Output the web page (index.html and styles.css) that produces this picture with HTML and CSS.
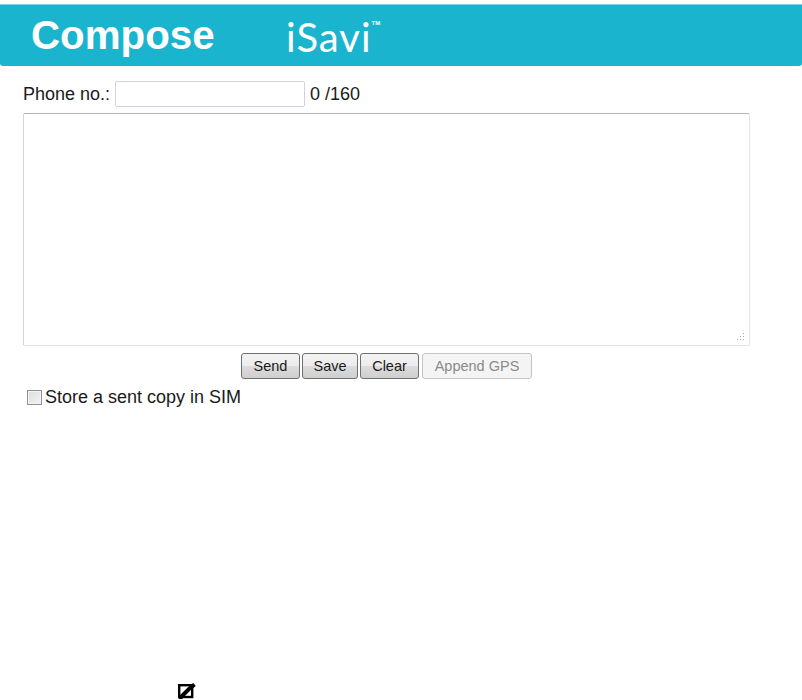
FILE: index.html
```html
<!DOCTYPE html>
<html lang="en">
<head>
<meta charset="utf-8">
<title>Compose</title>
<link rel="stylesheet" href="styles.css">
</head>
<body>
<header class="banner">
  <h1 class="title">Compose</h1>
  <div class="brand"><span class="brand-name">iSavi</span><span class="tm">TM</span></div>
</header>
<main class="form">
  <div class="phone-row">
    <label class="phone-label" for="phone">Phone no.:</label>
    <input class="phone-input" id="phone" type="text">
    <span class="counter">0 /160</span>
  </div>
  <div class="message-box">
    <svg class="grip" width="11" height="11" viewBox="0 0 11 11"><g fill="#a8a8a8"><rect x="8" y="1" width="1" height="1"/><rect x="8" y="4" width="1" height="1"/><rect x="5" y="4" width="1" height="1"/><rect x="8" y="7" width="1" height="1"/><rect x="5" y="7" width="1" height="1"/><rect x="2" y="7" width="1" height="1"/></g></svg>
  </div>
  <div class="actions">
    <button class="btn btn-send" type="button">Send</button>
    <button class="btn btn-save" type="button">Save</button>
    <button class="btn btn-clear" type="button">Clear</button>
    <button class="btn btn-gps" type="button" disabled>Append GPS</button>
  </div>
  <label class="store">
    <span class="check"></span>
    <span>Store a sent copy in SIM</span>
  </label>
</main>
<footer class="foot">
  <svg width="22" height="18" viewBox="0 0 22 18"><rect x="4.2" y="2.2" width="13" height="11.8" fill="#fff" stroke="#000" stroke-width="2.4"/><path d="M5.5 14.5 L14 6 L19.5 1.5" fill="none" stroke="#000" stroke-width="4"/><path d="M3 12 L8 16 L4 16 Z" fill="#000"/></svg>
</footer>
</body>
</html>
```
FILE: styles.css
```css
html, body { margin: 0; padding: 0; }
body {
  width: 802px;
  height: 700px;
  overflow: hidden;
  background: #fff;
  font-family: "Liberation Sans", Arial, sans-serif;
  font-size: 18px;
  color: #1a1a1a;
  display: flex;
  flex-direction: column;
}
.banner {
  margin-top: 4px;
  height: 62px;
  box-sizing: border-box;
  border-top: 1px solid #7fd3e2;
  border-radius: 0 0 3px 3px;
  background: #1ab4cf;
  display: flex;
  align-items: center;
  padding-left: 31px;
  color: #fff;
}
.title {
  margin: 0;
  font-size: 40.3px;
  font-weight: 700;
  line-height: 60px;
  width: 255px;
}
.brand {
  display: flex;
  align-items: flex-start;
  padding-top: 3px;
  font-family: "Lato", sans-serif;
  font-weight: 400;
}
.brand-name { font-size: 40px; line-height: 46px; letter-spacing: 1px; }
.tm { font-size: 6px; line-height: 8px; font-family: "Liberation Sans", sans-serif; font-weight: 700; margin-top: 5px; }
.form {
  padding: 15px 0 0 23px;
  width: 727px;
  display: flex;
  flex-direction: column;
}
.phone-row {
  display: flex;
  align-items: center;
  height: 26px;
}
.phone-label { width: 92px; white-space: nowrap; }
.phone-input {
  width: 190px;
  height: 26px;
  box-sizing: border-box;
  margin: 0;
  border: 1px solid #cfd3dc;
  border-radius: 2px;
  background: #fff;
}
.counter { margin-left: 5px; }
.message-box {
  margin-top: 6px;
  height: 233px;
  box-sizing: border-box;
  border: 1px solid #e0e4ea;
  border-top-color: #b4b4b4;
  border-left-color: #d4d4d4;
  border-radius: 2px;
  display: flex;
  justify-content: flex-end;
  align-items: flex-end;
}
.grip { display: block; margin: 0 3px 2px 0; }
.actions {
  margin-top: 7px;
  display: flex;
  justify-content: center;
  gap: 2px;
}
.btn {
  height: 26px;
  box-sizing: border-box;
  margin: 0;
  padding: 0;
  font-family: "Liberation Sans", Arial, sans-serif;
  font-size: 14.5px;
  color: #1a1a1a;
  border: 1px solid #707070;
  border-radius: 3px;
  background: linear-gradient(#f3f3f3 0%, #ececec 50%, #dcdcdc 51%, #cfcfcf 100%);
}
.btn-send { width: 59px; }
.btn-save { width: 56px; }
.btn-clear { width: 59px; }
.btn-gps {
  width: 110px;
  margin-left: 1px;
  color: #8a8a8a;
  border-color: #c4c4c4;
  background: #f4f4f4;
}
.store {
  margin: 9px 0 0 4px;
  display: flex;
  align-items: center;
  height: 18px;
  gap: 3px;
}
.check {
  width: 13px;
  height: 13px;
  border: 1px solid #8e8f8f;
  background: linear-gradient(135deg, #dcdcdc, #f4f4f4);
  box-shadow: inset 0 0 0 1px #f4f4f4;
}
.foot {
  position: absolute;
  left: 175px;
  top: 683px;
  line-height: 0;
}
```
